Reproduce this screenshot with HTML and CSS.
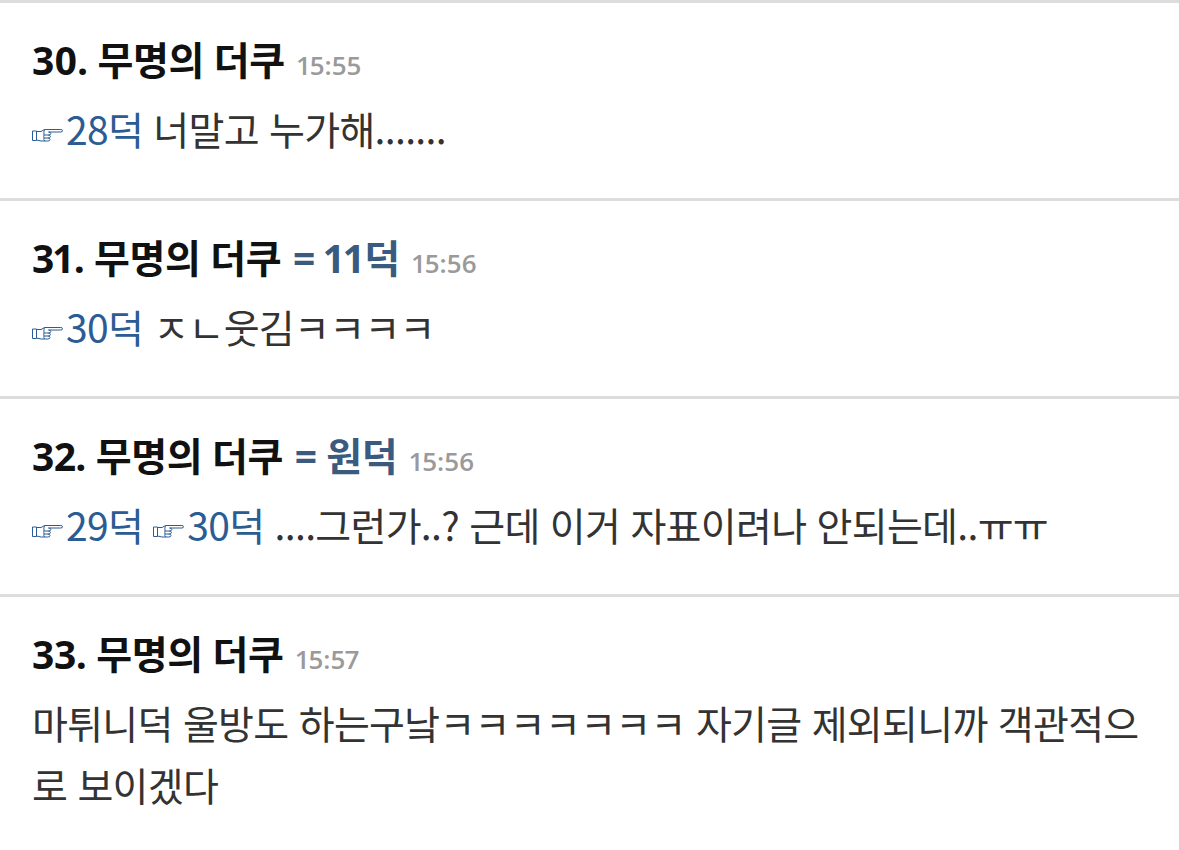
FILE: index.html
```html
<!DOCTYPE html>
<html lang="ko">
<head>
<meta charset="utf-8">
<link rel="stylesheet" href="styles.css">
</head>
<body>
<div class="list">
  <div class="post">
    <div class="head"><span class="name">30. 무명의 더쿠</span> <span class="time">15:55</span></div>
    <div class="body"><a class="ref"><svg class="hand" viewBox="0 0 31 15" width="31" height="15" aria-label="☞"><path d="M4.5 3.5H9L12.5 1.5H28.8Q30.5 1.5 30.5 2.8Q30.5 4 28.8 4H16.5M16.5 4Q18.8 4 18.8 5.5Q18.8 7 16.5 7H12M16.2 7Q18.4 7 18.4 8.5Q18.4 10 16.2 10H12M15.8 10Q18 10 18 11.5Q18 13 15.8 13H9L4.5 12M12.5 1.5Q11.5 4 12 7Q11.5 8.5 12 10Q11.5 11.5 12.5 13M0.5 3V12.5H4.5V3Z"/></svg>28덕</a> 너말고 누가해.......</div>
  </div>
  <div class="post">
    <div class="head"><span class="name">31. 무명의 더쿠</span> <span class="eq">= 11덕</span> <span class="time">15:56</span></div>
    <div class="body"><a class="ref"><svg class="hand" viewBox="0 0 31 15" width="31" height="15" aria-label="☞"><path d="M4.5 3.5H9L12.5 1.5H28.8Q30.5 1.5 30.5 2.8Q30.5 4 28.8 4H16.5M16.5 4Q18.8 4 18.8 5.5Q18.8 7 16.5 7H12M16.2 7Q18.4 7 18.4 8.5Q18.4 10 16.2 10H12M15.8 10Q18 10 18 11.5Q18 13 15.8 13H9L4.5 12M12.5 1.5Q11.5 4 12 7Q11.5 8.5 12 10Q11.5 11.5 12.5 13M0.5 3V12.5H4.5V3Z"/></svg>30덕</a> ㅈㄴ웃김ㅋㅋㅋㅋ</div>
  </div>
  <div class="post">
    <div class="head"><span class="name">32. 무명의 더쿠</span> <span class="eq">= 원덕</span> <span class="time">15:56</span></div>
    <div class="body"><a class="ref"><svg class="hand" viewBox="0 0 31 15" width="31" height="15" aria-label="☞"><path d="M4.5 3.5H9L12.5 1.5H28.8Q30.5 1.5 30.5 2.8Q30.5 4 28.8 4H16.5M16.5 4Q18.8 4 18.8 5.5Q18.8 7 16.5 7H12M16.2 7Q18.4 7 18.4 8.5Q18.4 10 16.2 10H12M15.8 10Q18 10 18 11.5Q18 13 15.8 13H9L4.5 12M12.5 1.5Q11.5 4 12 7Q11.5 8.5 12 10Q11.5 11.5 12.5 13M0.5 3V12.5H4.5V3Z"/></svg>29덕</a> <a class="ref"><svg class="hand" viewBox="0 0 31 15" width="31" height="15" aria-label="☞"><path d="M4.5 3.5H9L12.5 1.5H28.8Q30.5 1.5 30.5 2.8Q30.5 4 28.8 4H16.5M16.5 4Q18.8 4 18.8 5.5Q18.8 7 16.5 7H12M16.2 7Q18.4 7 18.4 8.5Q18.4 10 16.2 10H12M15.8 10Q18 10 18 11.5Q18 13 15.8 13H9L4.5 12M12.5 1.5Q11.5 4 12 7Q11.5 8.5 12 10Q11.5 11.5 12.5 13M0.5 3V12.5H4.5V3Z"/></svg>30덕</a> ....그런가..? 근데 이거 자표이려나 안되는데..ㅠㅠ</div>
  </div>
  <div class="post">
    <div class="head"><span class="name">33. 무명의 더쿠</span> <span class="time">15:57</span></div>
    <div class="body">마튀니덕 울방도 하는구낰ㅋㅋㅋㅋㅋㅋㅋ 자기글 제외되니까 객관적으로 보이겠다</div>
  </div>
</div>
</body>
</html>
```

FILE: styles.css
```css
html, body {
  margin: 0;
  padding: 0;
  background: #fff;
}
body {
  font-family: "Noto Sans CJK KR", "Noto Sans", sans-serif;
  color: #333;
}
.list {
  border-top: 3px solid #dddddd;
}
.post {
  border-bottom: 3px solid #dddddd;
  padding: 33px 32px 39px;
}
.post:last-child {
  border-bottom: none;
}
.head {
  font-family: "Open Sans", "Noto Sans CJK KR", sans-serif;
  font-variant-numeric: proportional-nums;
  font-size: 39px;
  line-height: 48px;
  font-weight: 700;
  letter-spacing: -0.4px;
  color: #111;
}
.eq {
  color: #3a5a80;
  margin-left: 2px;
}
.time {
  font-size: 26px;
  font-weight: 600;
  letter-spacing: 0;
  margin-left: 3px;
  color: #9a9a9a;
  font-family: "Open Sans", "Noto Sans", sans-serif;
}
.body {
  font-size: 39px;
  line-height: 62px;
  letter-spacing: -0.7px;
  color: #333;
  margin-top: 8px;
}
.ref {
  color: #2b5c94;
}
.hand {
  display: inline-block;
  vertical-align: 2px;
  margin-right: 3px;
  fill: none;
  stroke: #2b5c94;
  stroke-width: 1;
  stroke-linejoin: round;
}
```
